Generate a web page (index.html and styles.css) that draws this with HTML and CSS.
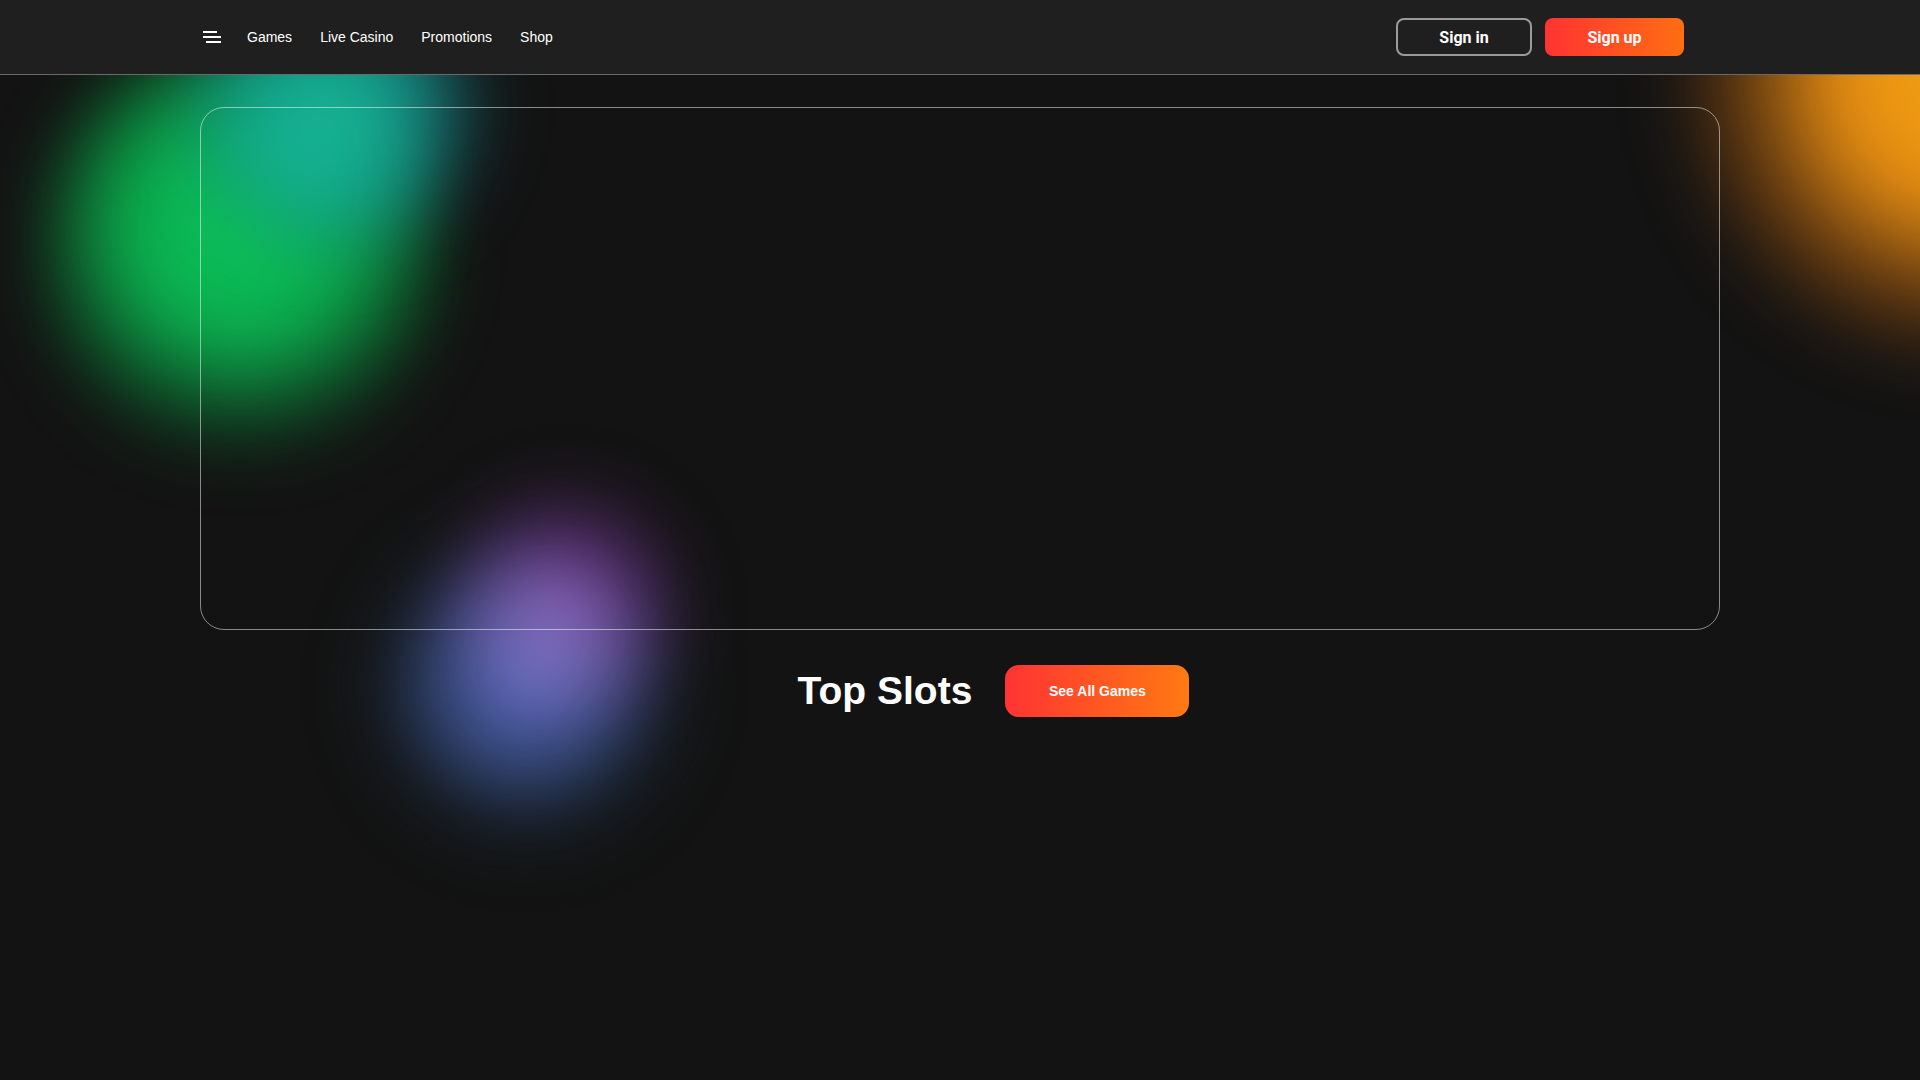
FILE: index.html
```html
<!DOCTYPE html>
<html lang="en">
<head>
<meta charset="utf-8">
<title>Casino</title>
<link rel="stylesheet" href="styles.css">
</head>
<body>
<div class="backdrop" aria-hidden="true">
  <div class="glow glow-green"></div>
  <div class="glow glow-cyan"></div>
  <div class="glow glow-orange"></div>
  <div class="glow glow-blue"></div>
  <div class="glow glow-purple"></div>
</div>
<header class="topbar">
  <div class="topbar-inner">
    <nav class="nav">
      <button class="burger" aria-label="Menu">
        <svg width="18" height="12" viewBox="0 0 18 12"><rect x="0" y="0" width="14" height="2" fill="#fff"/><rect x="0" y="5" width="18" height="2" fill="#fff"/><rect x="3" y="10" width="15" height="2" fill="#fff"/></svg>
      </button>
      <a class="nav-link" href="#">Games</a>
      <a class="nav-link" href="#">Live Casino</a>
      <a class="nav-link" href="#">Promotions</a>
      <a class="nav-link" href="#">Shop</a>
    </nav>
    <div class="auth">
      <button class="btn btn-outline">Sign in</button>
      <button class="btn btn-fill">Sign up</button>
    </div>
  </div>
</header>
<main class="main">
  <section class="hero"></section>
  <div class="section-head">
    <h2 class="section-title">Top Slots</h2>
    <a class="see-all" href="#">See All Games</a>
  </div>
</main>
</body>
</html>
```
FILE: styles.css
```css
* { box-sizing: border-box; }
html, body { margin: 0; padding: 0; }
body {
  background: #131313;
  color: #fff;
  font-family: "Liberation Sans", Arial, sans-serif;
  min-height: 1080px;
  position: relative;
  overflow: hidden;
}
.backdrop {
  position: absolute;
  inset: 0;
  overflow: hidden;
  z-index: 0;
  pointer-events: none;
}
.glow {
  position: absolute;
  border-radius: 50%;
}
.glow-green {
  left: 40px; top: 30px; width: 400px; height: 440px;
  background: radial-gradient(circle at 50% 45%, #0cc65a 0%, #0bad4e 35%, rgba(10,120,50,0.5) 60%, rgba(19,19,19,0) 75%);
  filter: blur(30px);
}
.glow-cyan {
  left: 170px; top: -40px; width: 330px; height: 300px;
  background: radial-gradient(circle at 50% 50%, rgba(24,190,160,0.95) 0%, rgba(22,170,165,0.7) 40%, rgba(20,120,140,0.3) 60%, rgba(19,19,19,0) 75%);
  filter: blur(30px);
}
.glow-orange {
  left: 1670px; top: -170px; width: 480px; height: 540px;
  background: radial-gradient(circle at 62% 45%, #f6a513 0%, #e68d12 30%, rgba(150,80,15,0.55) 55%, rgba(19,19,19,0) 72%);
  filter: blur(30px);
}
.glow-purple {
  left: 430px; top: 475px; width: 270px; height: 260px;
  background: radial-gradient(circle at 50% 50%, rgba(135,60,162,0.85) 0%, rgba(105,46,130,0.55) 40%, rgba(19,19,19,0) 72%);
  filter: blur(28px);
  mix-blend-mode: screen;
}
.glow-blue {
  left: 360px; top: 520px; width: 330px; height: 340px;
  background: radial-gradient(circle at 50% 48%, rgba(80,104,186,1) 0%, rgba(60,86,150,0.7) 38%, rgba(25,50,70,0.3) 58%, rgba(19,19,19,0) 75%);
  filter: blur(30px);
}
.topbar {
  position: relative;
  z-index: 2;
  height: 75px;
  background: #1f1f1f;
  border-bottom: 1px solid #6a6a6a;
}
.topbar-inner {
  width: 1520px;
  height: 100%;
  margin: 0 auto;
  padding: 0 36px 0 3px;
  display: flex;
  align-items: center;
  justify-content: space-between;
}
.nav {
  display: flex;
  align-items: center;
  gap: 28px;
}
.burger {
  background: none;
  border: 0;
  padding: 0;
  width: 18px;
  height: 12px;
  display: flex;
  margin-right: -2px;
  cursor: pointer;
}
.nav-link {
  color: #fff;
  text-decoration: none;
  font-size: 14px;
  line-height: 20px;
}
.auth {
  display: flex;
  gap: 13px;
}
.btn {
  height: 38px;
  border-radius: 8px;
  font-family: Roboto, "Liberation Sans", sans-serif;
  font-weight: 700;
  font-size: 16px;
  color: #fff;
  cursor: pointer;
}
.btn-outline {
  width: 136px;
  background: transparent;
  border: 2px solid #9a9a9a;
}
.btn-fill {
  width: 139px;
  border: 0;
  background: linear-gradient(90deg, #ff3333 0%, #ff6e12 100%);
}
.main {
  position: relative;
  z-index: 1;
  width: 1520px;
  margin: 0 auto;
  padding-top: 32px;
}
.hero {
  height: 523px;
  border: 1px solid rgba(255,255,255,0.5);
  border-radius: 24px;
}
.section-head {
  margin-top: 35px;
  display: flex;
  align-items: center;
  justify-content: center;
  gap: 33px;
  padding-left: 67px;
}
.section-title {
  margin: 0;
  font-size: 39px;
  font-weight: 700;
  line-height: 52px;
}
.see-all {
  width: 184px;
  height: 52px;
  border-radius: 14px;
  display: flex;
  align-items: center;
  justify-content: center;
  background: linear-gradient(90deg, #ff3333 0%, #ff7a12 100%);
  color: #fff;
  text-decoration: none;
  font-size: 14px;
  font-weight: 700;
}
```
